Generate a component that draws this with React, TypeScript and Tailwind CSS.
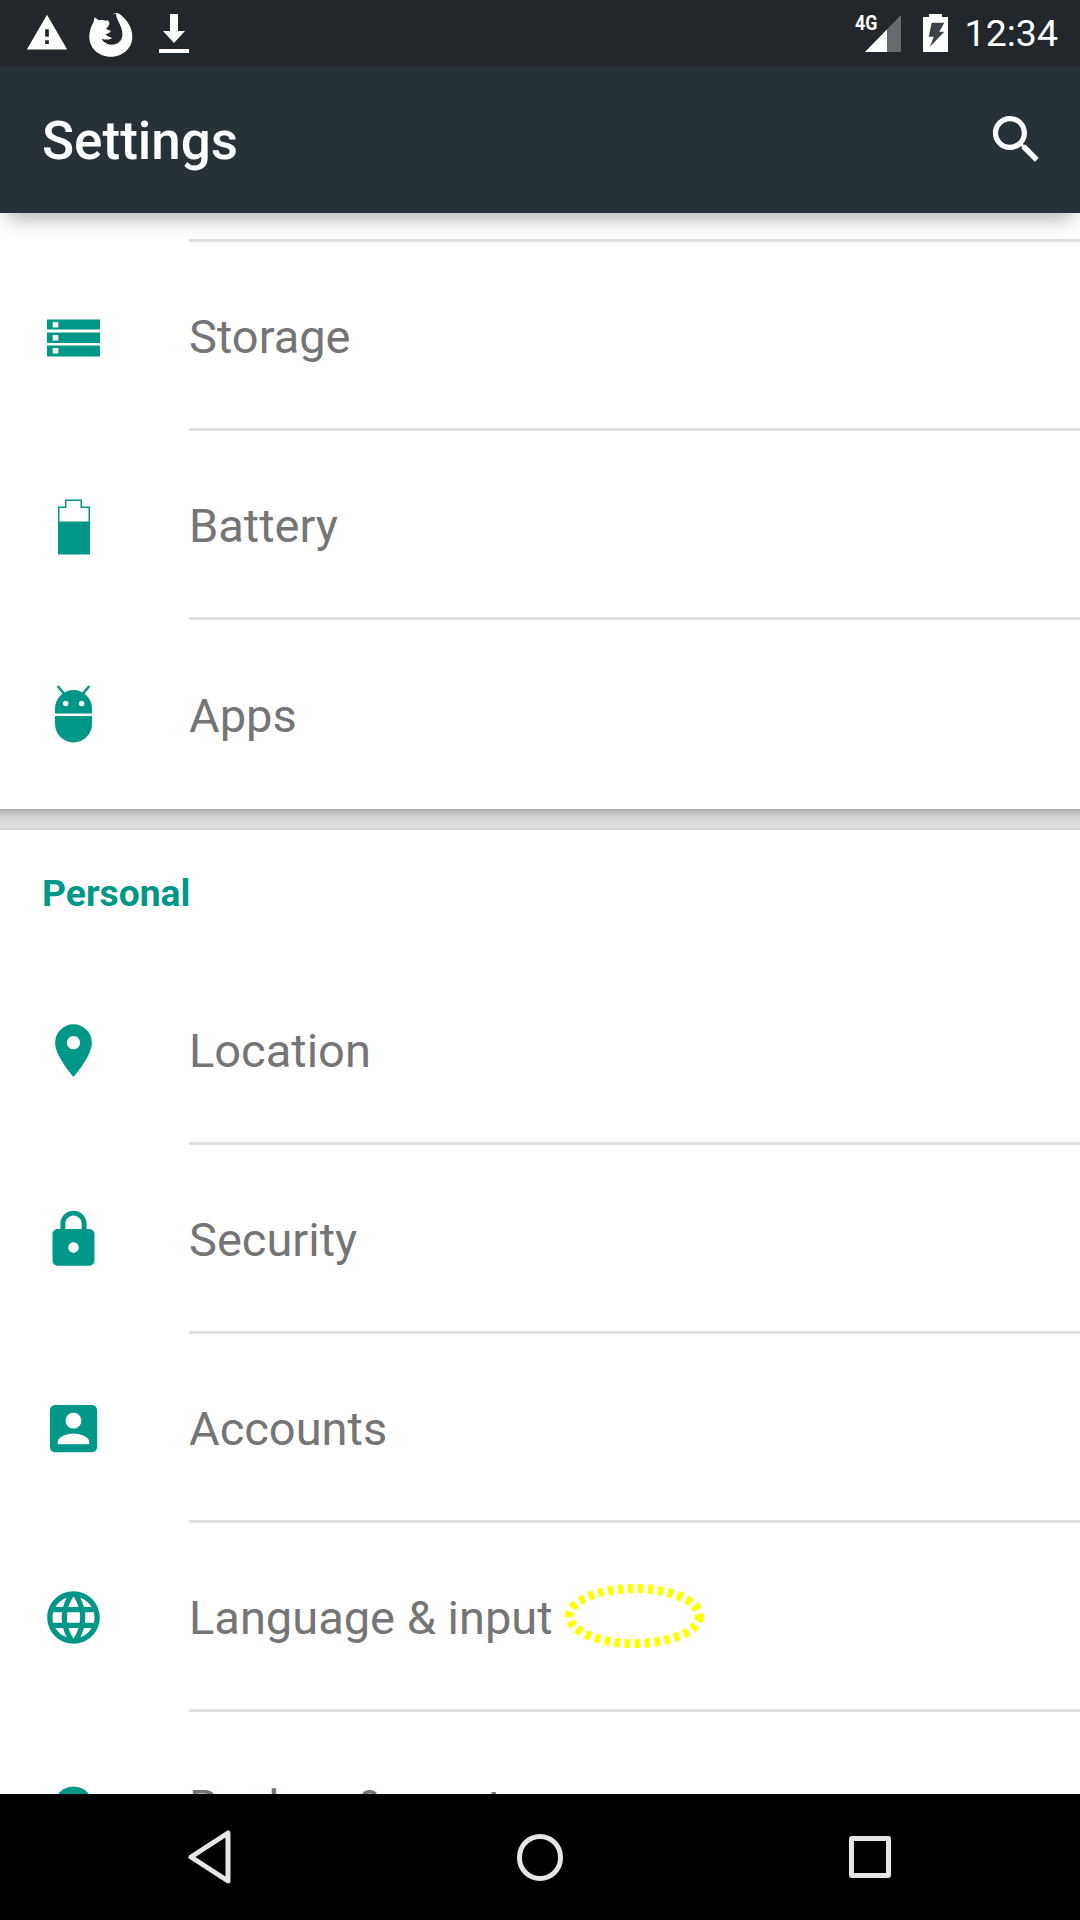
function Icon({ d, className = "h-[63px] w-[63px] shrink-0" }: { d: string; className?: string }) {
  return (
    <svg viewBox="0 0 24 24" className={className} fill="currentColor" fillRule="evenodd">
      <path d={d} />
    </svg>
  );
}

function StorageIcon() {
  return (
    <svg viewBox="0 0 63 63" className="h-[63px] w-[63px] shrink-0" fill="currentColor" fillRule="evenodd">
      <path d="M5 14.500H58V24.500H5ZM10.700 17V22.500H16.300V17Z" />
      <path d="M5 27.500H58V38H5ZM10.700 30V35.500H16.300V30Z" />
      <path d="M5 40.500H58V51.500H5ZM10.700 43V48.500H16.300V43Z" />
    </svg>
  );
}

function BatteryIcon() {
  return (
    <svg viewBox="0 0 63 63" className="h-[63px] w-[63px] shrink-0" fill="currentColor" fillRule="evenodd">
      <path d="M23 5.500h17v7h8v48H16v-48h7zM17.500 14v13.500h29V14h-8V7h-14v7z" />
    </svg>
  );
}

function AndroidIcon() {
  return (
    <svg viewBox="0 0 63 63" className="h-[63px] w-[63px] shrink-0" fill="currentColor">
      <path fillRule="evenodd" d="M13 30.500V25.500A18.500 18.500 0 0 1 50 25.500V30.500ZM21 20.500a2.700 2.700 0 1 0 5.400 0a2.700 2.700 0 1 0 -5.400 0ZM37 20.500a2.700 2.700 0 1 0 5.400 0a2.700 2.700 0 1 0 -5.400 0Z" />
      <path d="M13 33H50V41A18.500 18.500 0 0 1 13 41Z" />
      <path d="M16.300 3.800L21.300 9.800M46.700 3.800L41.700 9.800" stroke="currentColor" strokeWidth="2.500" strokeLinecap="round" fill="none" />
    </svg>
  );
}

function FirefoxIcon() {
  return (
    <svg viewBox="0 0 180 165" className="ml-[11px] h-[55px] w-[60px]">
      <path
        fill="#ffffff"
        d="M115 22C135 35 158 60 157 95C155 130 125 152 92 152C55 152 28 125 28 92C28 75 33 60 40 50L44 34L56 43C63 42 70 42 78 44L86 42L100 22Z"
      />
      <path
        fill="#21272b"
        d="M84 42L100 22L108 24C108 42 130 62 127 90C125 105 112 116 96 116C84 116 72 110 64 98C76 102 90 102 96 96C90 94 80 90 76 84C84 84 90 80 93 74C88 73 82 71 78 68C84 62 90 56 88 50Z"
      />
    </svg>
  );
}

const device = [
  { label: "Storage", icon: <StorageIcon /> },
  { label: "Battery", icon: <BatteryIcon /> },
  { label: "Apps", icon: <AndroidIcon /> },
];

const personal = [
  {
    label: "Location",
    icon: <Icon d="M12 2C8.130 2 5 5.130 5 9c0 5.250 7 13 7 13s7-7.750 7-13c0-3.870-3.130-7-7-7zm0 9.500c-1.380 0-2.500-1.120-2.500-2.500s1.120-2.500 2.500-2.500 2.500 1.120 2.500 2.500-1.120 2.500-2.500 2.500z" />,
  },
  {
    label: "Security",
    icon: <Icon d="M18 8h-1V6c0-2.760-2.240-5-5-5S7 3.240 7 6v2H6c-1.100 0-2 .9-2 2v10c0 1.100.9 2 2 2h12c1.100 0 2-.9 2-2V10c0-1.100-.9-2-2-2zm-6 9c-1.100 0-2-.9-2-2s.9-2 2-2 2 .9 2 2-.9 2-2 2zm3.100-9H8.900V6c0-1.710 1.390-3.100 3.100-3.100 1.710 0 3.100 1.390 3.100 3.100v2z" />,
  },
  {
    label: "Accounts",
    icon: <Icon d="M3 5v14c0 1.100.89 2 2 2h14c1.100 0 2-.9 2-2V5c0-1.100-.9-2-2-2H5c-1.110 0-2 .9-2 2zm12 4c0 1.660-1.340 3-3 3s-3-1.340-3-3 1.340-3 3-3 3 1.340 3 3zm-9 8c0-2 4-3.100 6-3.100s6 1.100 6 3.100v1H6v-1z" />,
  },
  {
    label: "Language & input",
    annotated: true,
    icon: <Icon d="M11.990 2C6.470 2 2 6.480 2 12s4.470 10 9.990 10C17.520 22 22 17.520 22 12S17.520 2 11.990 2zm6.930 6h-2.950c-.32-1.250-.78-2.450-1.380-3.560 1.840.63 3.370 1.910 4.330 3.560zM12 4.040c.83 1.200 1.480 2.530 1.910 3.960h-3.820c.43-1.430 1.080-2.760 1.910-3.960zM4.260 14C4.100 13.360 4 12.690 4 12s.1-1.360.26-2h3.380c-.08.66-.14 1.320-.14 2 0 .68.06 1.340.14 2H4.260zm.82 2h2.950c.32 1.250.78 2.450 1.380 3.560-1.840-.63-3.370-1.900-4.330-3.560zm2.950-8H5.080c.96-1.660 2.490-2.930 4.330-3.560C8.810 5.550 8.350 6.750 8.030 8zM12 19.960c-.83-1.200-1.480-2.530-1.910-3.960h3.820c-.43 1.430-1.080 2.760-1.910 3.960zM14.340 14H9.660c-.09-.66-.16-1.320-.16-2 0-.68.07-1.350.16-2h4.680c.09.65.16 1.320.16 2 0 .68-.07 1.340-.16 2zm.25 5.560c.6-1.110 1.060-2.310 1.380-3.560h2.950c-.96 1.650-2.490 2.930-4.330 3.560zM16.360 14c.08-.66.14-1.320.14-2 0-.68-.06-1.340-.14-2h3.380c.16.64.26 1.310.26 2s-.1 1.360-.26 2h-3.380z" />,
  },
  {
    // only the top of this row shows above the nav bar
    label: "Backup & reset",
    icon: <Icon d="M12 4.400a7.600 7.600 0 1 0 0 15.200a7.600 7.600 0 1 0 0-15.200z" />,
  },
];

function Row({ label, icon, annotated, last }: { label: string; icon: React.ReactNode; annotated?: boolean; last?: boolean }) {
  return (
    <div className="flex h-[189px] items-stretch">
      <div className="flex w-[189px] shrink-0 items-center pl-[42px] text-[#009688]">{icon}</div>
      <div className={`flex flex-1 items-center ${last ? "" : "border-b-[3px] border-[#e0e0e0]"}`}>
        <span className="pt-[4px] text-[47px] text-[#757575]">{label}</span>
        {annotated && (
          <svg viewBox="0 0 139 64" className="ml-[12px] h-[64px] w-[139px]">
            <ellipse cx="69.500" cy="32" rx="65" ry="27.500" fill="none" stroke="#ffff00" strokeWidth="9" strokeDasharray="5.500 4.500" />
          </svg>
        )}
      </div>
    </div>
  );
}

export default function App() {
  return (
    <div className="flex h-[1920px] w-[1080px] flex-col overflow-hidden bg-white font-['Roboto',sans-serif]">
      <div className="flex h-[66px] shrink-0 items-center bg-[#21272b] pl-[25px] pr-[22px] text-white">
        <svg viewBox="0 0 24 24" className="h-[44px] w-[44px]" fill="currentColor" fillRule="evenodd">
          <path d="M1 21h22L12 2 1 21zm12-3h-2v-2h2v2zm0-4h-2v-4h2v4z" />
        </svg>
        <FirefoxIcon />
        <svg viewBox="0 0 30 39" className="ml-[19px] h-[39px] w-[30px]" fill="currentColor">
          <path d="M11 0h8v17h7L15 29 4 17h7zM0 35h30v4H0z" />
        </svg>
        <div className="flex-1" />
        <span className="mb-[19px] mr-[-17px] origin-left scale-x-[0.85] text-[21px] font-bold leading-none">4G</span>
        <svg viewBox="0 0 36 37" className="h-[37px] w-[36px]">
          <path d="M0 37L36 0V37Z" fill="#666b6e" />
          <path d="M0 37L22 14.500V37Z" fill="#ffffff" />
        </svg>
        <svg viewBox="0 0 25 38" className="ml-[22px] h-[38px] w-[25px]">
          <path d="M0 3h6V0h13v3h6v35H0z" fill="#ffffff" />
          <path d="M8.700 8.700H21.300L16.300 17.700H21.300L7 32.700L10.700 22.700H5.700Z" fill="#3c4245" />
        </svg>
        <span className="ml-[17px] pt-[1px] text-[37.500px] leading-none">12:34</span>
      </div>

      <div className="relative z-10 flex h-[147px] shrink-0 items-center justify-between bg-[#263238] pl-[42px] pr-[32px] shadow-[0_14px_18px_-8px_rgba(0,0,0,0.3)]">
        <span className="pt-[4px] text-[53px] font-medium text-white">Settings</span>
        <Icon
          className="h-[63px] w-[63px] text-white"
          d="M15.500 14h-.79l-.28-.27C15.410 12.590 16 11.110 16 9.500 16 5.910 13.090 3 9.500 3S3 5.910 3 9.500 5.910 16 9.500 16c1.610 0 3.090-.59 4.230-1.570l.27.28v.79l5 4.990L20.490 19l-4.990-5zm-6 0C7.010 14 5 11.990 5 9.500S7.010 5 9.500 5 14 7.010 14 9.500 11.990 14 9.500 14z"
        />
      </div>

      <div className="min-h-0 flex-1 overflow-hidden">
        <div className="ml-[189px] h-[29px] border-b-[3px] border-[#e0e0e0]" />
        {device.map((item, i) => (
          <Row key={item.label} label={item.label} icon={item.icon} last={i === device.length - 1} />
        ))}
        <div className="h-[21px] bg-[linear-gradient(180deg,#acacac_0%,#d4d4d4_35%,#e0e0de_85%,#cfcfcf_100%)]" />
        <div className="flex h-[126px] items-center pl-[42px] pt-[1px] text-[37.250px] font-bold text-[#009688]">Personal</div>
        {personal.map((item) => (
          <Row key={item.label} label={item.label} icon={item.icon} annotated={item.annotated} />
        ))}
      </div>

      <div className="flex h-[126px] shrink-0 items-center justify-center bg-black">
        <div className="flex w-[330px] justify-center">
          <svg viewBox="0 0 46 54" className="h-[54px] w-[46px]" fill="none" stroke="#e6e6e6" strokeWidth="5" strokeLinejoin="round">
            <path d="M4 27L41 3V51Z" />
          </svg>
        </div>
        <div className="flex w-[330px] justify-center">
          <div className="h-[47px] w-[46px] rounded-full border-[5px] border-[#e6e6e6]" />
        </div>
        <div className="flex w-[330px] justify-center">
          <div className="h-[42px] w-[42px] rounded-[3px] border-[5px] border-[#e6e6e6]" />
        </div>
      </div>
    </div>
  );
}
